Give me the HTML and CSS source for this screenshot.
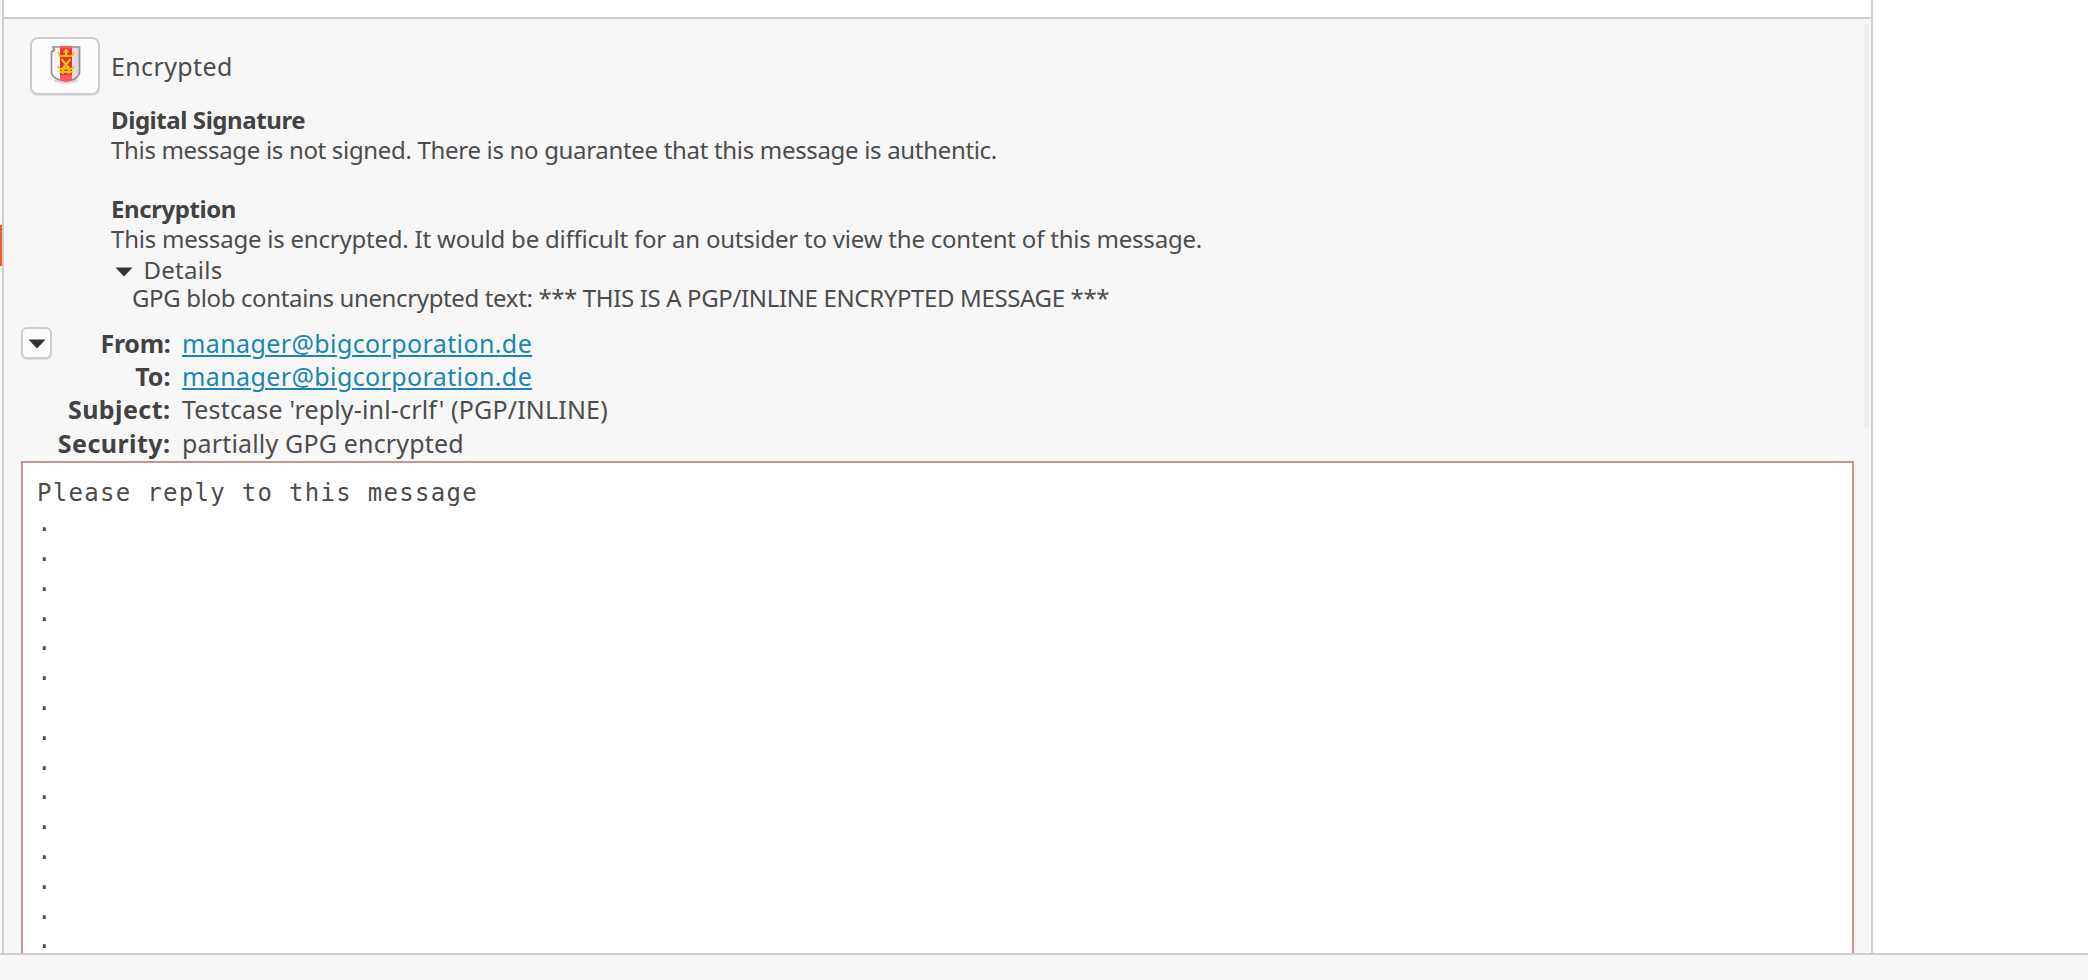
FILE: index.html
```
<!DOCTYPE html>
<html lang="en">
<head>
<meta charset="utf-8">
<title>Message</title>
<link rel="stylesheet" href="styles.css">
</head>
<body>
<div class="window">
  <div class="main">
    <div class="edge"><div class="edge-mark"></div></div>
    <div class="preview">
      <div class="list-end"></div>
      <div class="message">
        <div class="message-body">
          <div class="security">
            <button class="badge" aria-label="Encrypted">
              <svg width="36" height="42" viewBox="0 0 36 42">
                <defs><linearGradient id="silver"><stop offset="0" stop-color="#fff"/><stop offset="1" stop-color="#dcd3dc"/></linearGradient></defs>
                <ellipse cx="18" cy="36.500" rx="12" ry="3" fill="#777" opacity=".3"/>
                <path d="M5 3H31.500V29Q30 34 24 36H12Q5 34 3.500 29V8L6 6Z" fill="url(#silver)" stroke="#929092" stroke-width="1.700"/>
                <path d="M4 8L7 6L5 3" fill="none" stroke="#929092"/>
                <path d="M12 2H24V36Q18 39 12 36Z" fill="#ee2d31"/>
                <path d="M12 2H24V4.500H12ZM12 31H24V36Q18 39 12 36Z" fill="#ff5960"/>
                <path d="M10 8Q11 12 13 12H23Q25 12 26 8M18 5V11M15.500 7.500H20.500M13.500 15L22.500 26M22.500 15L13.500 26M10 22Q12 27 18 24Q24 27 26 22M11 28H25M15 25V30M21 25V30" fill="none" stroke="#f2c60a" stroke-width="2"/>
              </svg>
            </button>
            <div class="status">Encrypted</div>
            <div class="details">
              <div class="line bold">Digital Signature</div>
              <div class="line unsigned">This message is not signed. There is no guarantee that this message is authentic.</div>
              <div class="line"></div>
              <div class="line bold">Encryption</div>
              <div class="line encrypted">This message is encrypted. It would be difficult for an outsider to view the content of this message.</div>
              <div class="expander"><svg class="arrow" width="18" height="10" viewBox="0 0 18 10"><path d="M0.500 0.500H17.500L9 9.500Z"/></svg><span>Details</span></div>
              <div class="line blob">GPG blob contains unencrypted text: *** THIS IS A PGP/INLINE ENCRYPTED MESSAGE ***</div>
            </div>
          </div>
          <div class="headers">
            <button class="toggle" aria-label="Collapse headers"><svg class="arrow" width="18" height="10" viewBox="0 0 18 10"><path d="M0.500 0.500H17.500L9 9.500Z"/></svg></button>
            <div class="fields">
              <div class="name tight">From:</div><div><a class="address">manager@bigcorporation.de</a></div>
              <div class="name">To:</div><div><a class="address">manager@bigcorporation.de</a></div>
              <div class="name wide">Subject:</div><div class="value">Testcase 'reply-inl-crlf' (PGP/INLINE)</div>
              <div class="name wide">Security:</div><div class="value">partially GPG encrypted</div>
            </div>
          </div>
          <pre class="content">Please reply to this message
.
.
.
.
.
.
.
.
.
.
.
.
.
.
.</pre>
        </div>
        <div class="scroll"><div class="thumb"></div></div>
      </div>
    </div>
    <div class="side"></div>
  </div>
  <div class="statusbar"></div>
</div>
</body>
</html>
```
FILE: styles.css
```
* { box-sizing: border-box; }
body { margin: 0; background: #fff; color: #4c4c4c; font: 24px "Noto Sans", sans-serif; }
.window { width: 2088px; height: 980px; display: flex; flex-direction: column; overflow: hidden; }
.main { height: 953px; display: flex; overflow: hidden; }
.edge { width: 2px; flex: none; background: #f7f7f7; padding-top: 225px; }
.edge-mark { height: 41px; background: #f15a29; }
.preview { width: 1871px; flex: none; height: 953px; border: solid #cfcfcf; border-width: 0 2px; display: flex; flex-direction: column; }
.list-end { height: 19px; flex: none; background: #fff; border-bottom: 2px solid #cfcfcf; }
.message { flex: 1; min-height: 0; display: flex; background: #f7f7f7; overflow: hidden; }
.message-body { flex: 1; padding-left: 17px; }
.security { display: grid; grid-template-columns: 81px 1fr; grid-template-rows: 85.8px auto; padding-left: 9px; height: 308px; }
.badge { width: 70px; height: 58px; margin-top: 18px; border: 2px solid #cdcdcd; border-radius: 8px; background: #fcfcfc; box-shadow: 0 1px 1px #ddd; display: flex; align-items: center; justify-content: center; padding: 0 0 2px 2px; }
.status { padding-top: 31px; font-size: 25px; line-height: 32px; letter-spacing: .38px; }
.details { grid-column: 2; }
.line { height: 29.8px; line-height: 29.8px; white-space: nowrap; }
.bold { font-weight: 700; color: #424242; letter-spacing: -.43px; }
.unsigned { letter-spacing: -.32px; }
.encrypted { letter-spacing: -.216px; }
.expander { height: 29.6px; line-height: 32px; display: flex; gap: 10.5px; padding-left: 4px; letter-spacing: .27px; }
.expander .arrow { margin-top: 13px; }
.arrow { fill: #2e3436; flex: none; }
.blob { padding-left: 21px; letter-spacing: -.36px; }
.headers { height: 134.4px; display: flex; }
.toggle { width: 31px; height: 32px; border: 2px solid #cdcdcd; border-radius: 6px; background: #fcfcfc; box-shadow: 0 1px 1px #ddd; padding: 2px 0 0; display: flex; align-items: center; justify-content: center; }
.fields { display: grid; grid-template-columns: 118.5px 1fr; grid-auto-rows: 33.2px; column-gap: 11.5px; font-size: 25px; line-height: 32.6px; white-space: nowrap; }
.name { text-align: right; font-weight: 700; color: #424242; }
.tight { letter-spacing: -.3px; }
.wide { letter-spacing: .45px; }
.value { letter-spacing: .17px; }
.address { color: #1b87ad; letter-spacing: .39px; text-decoration: underline; text-decoration-thickness: 2px; text-underline-offset: 2px; }
.content { margin: 0; width: 1833px; height: 520px; border: 2px solid #c99594; background: #fff; padding: 16px 14px 0; font: 24px/29.8px "DejaVu Sans Mono", monospace; letter-spacing: 1.3px; }
.scroll { width: 17px; flex: none; padding: 5px 0 0 10px; }
.thumb { width: 5px; height: 404px; border-radius: 3px; background: #eee; }
.side { flex: 1; }
.statusbar { flex: 1; background: #f7f7f7; border-top: 2px solid #cfcfcf; }
```
